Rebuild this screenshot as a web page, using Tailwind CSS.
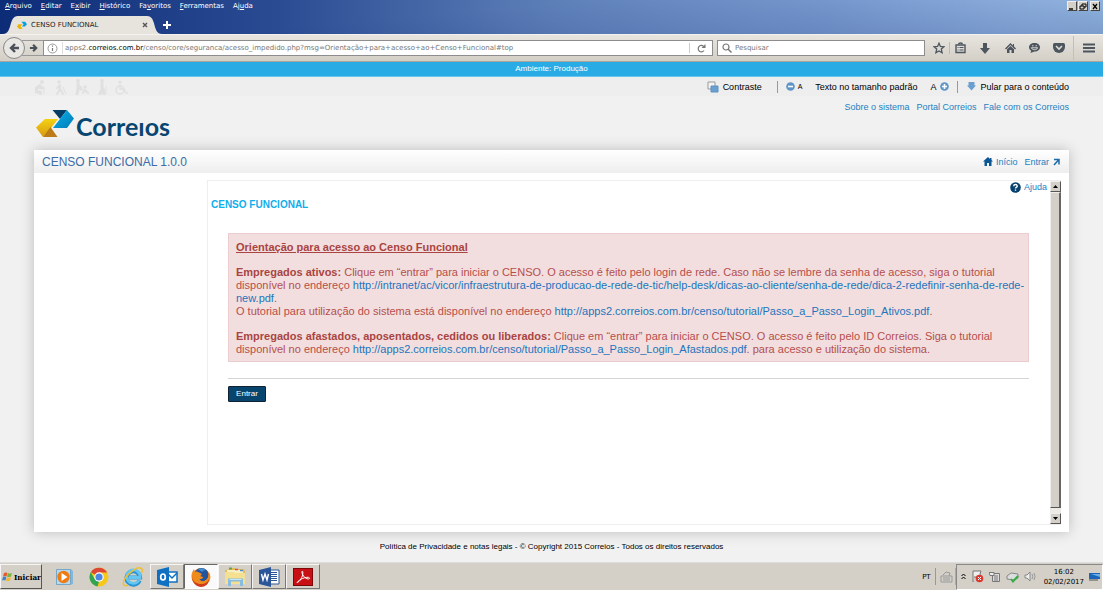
<!DOCTYPE html>
<html lang="pt-BR">
<head>
<meta charset="utf-8">
<title>CENSO FUNCIONAL</title>
<script src="https://cdn.jsdelivr.net/npm/@tailwindcss/browser@4"></script>
</head>
<body class="flex min-h-screen flex-col bg-[#f1f1f1] font-['Liberation_Sans',Arial,sans-serif] text-[9px] leading-3 text-[#222]">

<!-- Browser chrome -->
<header class="font-['DejaVu_Sans',sans-serif]">
  <div class="flex h-[34px] justify-between bg-[linear-gradient(175deg,transparent_40%,#0a246a44),linear-gradient(90deg,#0d2c78,#2a4b92_25%,#5d7fb8_50%,#7d9fd4_75%,#9fc2ec_94%,#a6caf0)]">
    <div class="flex flex-col justify-between">
      <nav class="flex h-3 gap-[9px] pl-[5px] text-[7px] text-white">
        <button><u>A</u>rquivo</button><button><u>E</u>ditar</button><button>E<u>x</u>ibir</button><button><u>H</u>istórico</button><button>Fa<u>v</u>oritos</button><button><u>F</u>erramentas</button><button>Aj<u>u</u>da</button>
      </nav>
      <div class="flex h-[18px] items-center pl-[2px]">
        <div class="relative flex h-[18px] w-[160px] items-center pl-[15px]">
          <svg class="absolute inset-0" width="160" height="18" viewBox="0 0 160 18"><path d="M1 18C11 18 6 0 16 0H145C155 0 150 18 160 18Z" fill="#e7e4de"/></svg>
          <svg class="relative mr-[4px]" width="10" height="9" viewBox="0 0 38 28"><path d="M5 9h16l-7 8 7 10H8L0 18z" fill="#eab20b"/><path d="M17 0h14l7 9-8 9H18l7-8z" fill="#09a1dc"/></svg>
          <span class="relative grow text-[7px] text-[#222]">CENSO FUNCIONAL</span>
          <button class="relative mr-[14px]" aria-label="Fechar aba"><svg width="6" height="6" viewBox="0 0 6 6"><path d="M1 1l4 4M5 1l-4 4" stroke="#555" stroke-width="1.4"/></svg></button>
        </div>
        <button aria-label="Nova aba"><svg width="10" height="8" viewBox="0 0 10 8"><path d="M5 0v8M1 4h8" stroke="#fff" stroke-width="2"/></svg></button>
      </div>
    </div>
    <div class="flex h-[11px] gap-px pt-px pr-[3px]">
      <button class="border border-[#eee] border-r-[#444] border-b-[#444] bg-[#d4d0c8]" aria-label="Minimizar"><svg width="8" height="7" viewBox="0 0 8 7"><path d="M1 6h4" stroke="#000" stroke-width="1.4"/></svg></button>
      <button class="border border-[#eee] border-r-[#444] border-b-[#444] bg-[#d4d0c8]" aria-label="Restaurar"><svg width="8" height="7" viewBox="0 0 8 7"><path d="M3 3V1h4v3H5M1 3h4v3H1z" fill="none" stroke="#000"/></svg></button>
      <button class="ml-px border border-[#eee] border-r-[#444] border-b-[#444] bg-[#d4d0c8]" aria-label="Fechar"><svg width="8" height="7" viewBox="0 0 8 7"><path d="M2 1l4 5M6 1L2 6" stroke="#000" stroke-width="1.3"/></svg></button>
    </div>
  </div>

  <div class="flex h-[28px] items-center border-t border-b border-t-[#f4f2ef] border-b-[#a9a59d] bg-linear-to-b from-[#e8e5e0] to-[#d3cfc6] pr-[8px] pl-[3px]">
    <button class="z-10 flex size-[22px] items-center justify-center rounded-full border border-[#888] bg-[#e9e7e3]" aria-label="Voltar"><svg width="11" height="10" viewBox="0 0 11 10"><path d="M10 5H2M6 1L2 5l4 4" fill="none" stroke="#4a5158" stroke-width="2.4"/></svg></button>
    <button class="-ml-[3px] flex h-4 w-[21px] items-center justify-center border-y border-[#999] pl-px" aria-label="Avançar"><svg width="9" height="8" viewBox="0 0 11 10"><path d="M1 5h8M5 1l4 4-4 4" fill="none" stroke="#4a5158" stroke-width="2.6"/></svg></button>
    <div class="flex h-4 min-w-0 grow items-center border border-[#8d8d8d] bg-white">
      <svg class="mr-[4px] ml-[3px] shrink-0" width="11" height="11" viewBox="0 0 11 11"><circle cx="5.500" cy="5.500" r="4.500" fill="none" stroke="#999"/><path d="M5.500 5v3M5.500 2.500v1.300" stroke="#777" stroke-width="1.200"/></svg>
      <span class="h-3 border-l border-[#ddd]"></span>
      <span class="ml-[2px] grow truncate text-[7px] text-[#777]">apps2.<b class="font-normal text-black">correios.com.br</b>/censo/core/seguranca/acesso_impedido.php?msg=Orientação+para+acesso+ao+Censo+Funcional#top</span>
      <button class="flex h-[10px] w-[23px] items-center justify-center border-l border-[#ccc]" aria-label="Recarregar"><svg width="9" height="9" viewBox="0 0 9 9"><path d="M7 6.500A3.200 3.200 0 1 1 6.500 2.200" fill="none" stroke="#777" stroke-width="1.200"/><path d="M8.500 0v4h-4z" fill="#777"/></svg></button>
    </div>
    <label class="ml-[4px] flex h-4 w-[208px] items-center border border-[#8d8d8d] bg-white pl-[4px]">
      <svg class="mr-[3px] shrink-0" width="10" height="10" viewBox="0 0 10 10"><circle cx="4" cy="4" r="3" fill="none" stroke="#777" stroke-width="1.200"/><path d="M6 6l3.500 3.500" stroke="#777" stroke-width="1.500"/></svg>
      <input class="w-full text-[7px] placeholder:text-[#777]" type="search" placeholder="Pesquisar" aria-label="Pesquisar">
    </label>
    <div class="flex items-center pl-[8px]">
      <button class="mr-[4px]" aria-label="Favoritar"><svg width="12" height="12" viewBox="0 0 12 12"><path d="M6 1.200l1.400 3.200 3.600.4-2.700 2.300.8 3.600L6 8.900l-3.100 1.800.8-3.600L1 4.800l3.600-.4z" fill="none" stroke="#4d565f" stroke-width="1.300"/></svg></button>
      <span class="mr-[5px] h-3 border-l border-[#bbb]"></span>
      <button class="mr-[14px]" aria-label="Biblioteca"><svg width="11" height="12" viewBox="0 0 11 12"><path d="M3.500 2.500c0-2 4-2 4 0" fill="none" stroke="#4d565f" stroke-width="1.300"/><path d="M1 3h9v7.500H1z" fill="none" stroke="#4d565f" stroke-width="1.400"/><path d="M2.500 5.500h1M4.500 5.500h4M2.500 8h1M4.500 8h4" stroke="#4d565f"/></svg></button>
      <button class="mr-[15px]" aria-label="Downloads"><svg width="10" height="11" viewBox="0 0 10 11"><path d="M3 0h4v5h3l-5 6-5-6h3z" fill="#4d565f"/></svg></button>
      <button class="mr-[13px]" aria-label="Página inicial"><svg width="11" height="11" viewBox="0 0 11 11"><path d="M5.500 0L0 5.500l1 1L5.500 2 10 6.500l1-1-2-2V1H8v1.500zM2 6.300L5.500 3 9 6.300V10H6.500V7h-2v3H2z" fill="#4d565f"/></svg></button>
      <button class="mr-[13px]" aria-label="Conversas"><svg width="11" height="10" viewBox="0 0 11 10"><path d="M5.500 0C9 0 11 2 11 4.300S9 8.600 5.500 8.600L1.500 10l.7-2.300C.8 7 0 5.800 0 4.300 0 2 2 0 5.500 0" fill="#4d565f"/><path d="M3 2.800h1.500M6.500 2.800H8M2.300 4.800c1 2.500 5.400 2.500 6.400 0z" fill="none" stroke="#dedbd4"/></svg></button>
      <button class="mr-[8px]" aria-label="Pocket"><svg width="12" height="10" viewBox="0 0 12 10"><path d="M1.500 0h9Q12 0 12 1.500V4a6 6 0 0 1-12 0V1.500Q0 0 1.500 0" fill="#4d565f"/><path d="M3 3l3 3 3-3" fill="none" stroke="#dedbd4" stroke-width="1.600"/></svg></button>
      <span class="mr-[9px] h-[24px] border-l border-[#c4c0b8]"></span>
      <button aria-label="Menu"><svg width="12" height="10" viewBox="0 0 12 10"><path d="M0 1.500h12M0 5h12M0 8.500h12" stroke="#4d565f" stroke-width="2"/></svg></button>
    </div>
  </div>
</header>

<!-- Environment banner and accessibility bar -->
<div class="flex h-[15px] items-center justify-center border-b border-[#6bc4ec] bg-[#29abe5] text-[8px] text-white">Ambiente: Produção</div>
<div class="flex h-[19px] items-center justify-between bg-[#eee] px-[34px] text-black">
  <svg width="94" height="16" viewBox="0 0 94 16" fill="none" stroke="#e0e0e0" stroke-width="2" stroke-linecap="round" stroke-linejoin="round">
    <g fill="#e0e0e0" stroke="none"><circle cx="8" cy="3" r="2"/><circle cx="25" cy="3" r="1.700"/><circle cx="44" cy="2" r="1.900"/><circle cx="51" cy="8" r="1.700"/><circle cx="68" cy="2" r="1.900"/><circle cx="86" cy="3" r="1.600"/></g>
    <path d="M6 6.500L2.500 9v4h4v2M4 8l5 1" stroke-width="3"/><path d="M10 9v6" stroke-width="1"/>
    <path d="M26 6v4l-3 5M26 10l3 5M26 6l-3 3"/><path d="M29 8l3 7" stroke-width="1"/>
    <path d="M44 5v5l-1 5M44 6l3 4" stroke-width="3"/><path d="M50 11l-1 3M51 11l3 3"/>
    <path d="M68 5v5l-2 5M69 10l1 5" stroke-width="3"/><path d="M72 8v7" stroke-width="1"/>
    <path d="M86 6v4h4l2 4h2" stroke-width="1.500"/><circle cx="86" cy="11" r="4" stroke-width="1.500"/>
  </svg>
  <div class="flex items-center">
    <a href="#contraste" class="flex items-center gap-[4px]"><svg width="12" height="12" viewBox="0 0 12 12"><path d="M1 1h7v7H1z" fill="#f4f4f4" stroke="#999"/><path d="M4 5h7v6H4z" fill="#6a9fd0" stroke="#5c91c4"/></svg>Contraste</a>
    <span class="mx-[8px] ml-[15px] h-3 border-l border-[#999]"></span>
    <button class="flex items-center gap-[3px] text-[7px]" aria-label="Diminuir texto"><svg width="9" height="9" viewBox="0 0 9 9"><circle cx="4.500" cy="4.500" r="4.300" fill="#5f96c9"/><path d="M2 4.500h5" stroke="#fff" stroke-width="1.600"/></svg>A</button>
    <button class="ml-[13px]">Texto no tamanho padrão</button>
    <button class="ml-[13px] flex items-center gap-[4px]" aria-label="Aumentar texto">A<svg width="9" height="9" viewBox="0 0 9 9"><circle cx="4.500" cy="4.500" r="4.300" fill="#5f96c9"/><path d="M2 4.500h5M4.500 2v5" stroke="#fff" stroke-width="1.600"/></svg></button>
    <span class="mr-[9px] ml-[8px] h-3 border-l border-[#999]"></span>
    <a href="#conteudo" class="flex items-center gap-[4px]"><svg width="9" height="9" viewBox="0 0 9 9"><path d="M1.500 0h6v3.500H9L4.500 8.500 0 3.500h1.500z" fill="#6a9fd0"/></svg>Pular para o conteúdo</a>
  </div>
</div>

<!-- Logo and site links -->
<div class="flex h-[54px] items-start justify-between px-[34px]">
  <a href="#inicio" class="mt-[13px] ml-[2px]" aria-label="Correios">
    <svg width="140" height="36" viewBox="0 0 140 36">
      <defs>
        <linearGradient id="gold" x2="0" y2="1"><stop stop-color="#f4d111"/><stop offset="1" stop-color="#d79a13"/></linearGradient>
        <linearGradient id="blue" x2="1" y2="1"><stop stop-color="#04b5ee"/><stop offset="1" stop-color="#0479b5"/></linearGradient>
      </defs>
      <path d="M9 10h13l-7 9-8 9L0 18.500z" fill="url(#gold)"/><path d="M14.500 18l7 10H7z" fill="#bd7b16"/>
      <path d="M16.500 1H31L24 10z" fill="#053d67"/><path d="M31 1l7 8.500L31 19H17l7-9z" fill="url(#blue)"/>
      <text x="40" y="27" font-family="Lato, 'Liberation Sans', sans-serif" font-size="25" font-weight="700" fill="#074670">Correıos</text>
    </svg>
  </a>
  <nav class="mt-[5px] flex gap-[7px] text-[#237fc1]"><a href="#sobre">Sobre o sistema</a><a href="#portal">Portal Correios</a><a href="#fale">Fale com os Correios</a></nav>
</div>

<!-- Application card -->
<main class="mx-[34px] flex grow flex-col bg-white pb-[7px] shadow-[0_0_12px_#bbb]">
  <div class="flex h-[23px] items-center justify-between bg-linear-to-b from-white to-[#eee] pr-[9px] pl-[8px]">
    <h1 class="text-[12px] text-[#3c6ca5]">CENSO FUNCIONAL 1.0.0</h1>
    <nav class="flex items-center gap-[7px] text-[#237fc1]">
      <a href="#inicio" class="flex items-center gap-[3px]"><svg width="10" height="9" viewBox="0 0 10 9"><path d="M5 0L0 4.500h1.500V9H4V6h2v3h2.500V4.500H10L8.500 3V1H7v1z" fill="#0b5796"/></svg>Início</a>
      <a href="#entrar" class="flex items-center gap-[4px]">Entrar<svg width="7" height="8" viewBox="0 0 7 8"><path d="M1 1.500h5v5M6 1.500L1 7" fill="none" stroke="#1c6aa8" stroke-width="1.500"/></svg></a>
    </nav>
  </div>
  <div class="mt-[7px] mr-[8px] ml-[173px] flex grow border-t border-b border-l border-[#eee]">
    <section id="conteudo" class="min-w-0 grow pr-[21px] pl-[3px]">
      <a href="#ajuda" class="-mr-[18px] flex items-center justify-end gap-[3px] text-[#237fc1]"><svg width="11" height="11" viewBox="0 0 11 11"><circle cx="5.500" cy="5.500" r="5.300" fill="#07406f"/><path d="M3.700 4.300c0-2.400 3.600-2.200 3.600-.2 0 1.300-1.800 1.300-1.800 2.500M5.500 7.500v1.300" fill="none" stroke="#fff" stroke-width="1.400"/></svg>Ajuda</a>
      <h2 class="mt-[6px] text-[10px] font-bold text-[#10aeec]">CENSO FUNCIONAL</h2>
      <div class="mt-[22px] ml-[17px] border border-[#ebcdd0] bg-[#f2dede] pt-[7px] pb-[5px] pl-[7px] text-[11px] leading-[13px] text-[#b54f4d]">
        <h3 class="font-bold text-[#a94442] underline">Orientação para acesso ao Censo Funcional</h3>
        <p class="mt-[12px]"><b class="text-[#a94442]">Empregados ativos:</b> Clique em “entrar” para iniciar o CENSO. O acesso é feito pelo login de rede. Caso não se lembre da senha de acesso, siga o tutorial<br>disponível no endereço <a class="text-[#1d75bd]" href="#dica">http://intranet/ac/vicor/infraestrutura-de-producao-de-rede-de-tic/help-desk/dicas-ao-cliente/senha-de-rede/dica-2-redefinir-senha-de-rede-<br>new.pdf</a>.<br>O tutorial para utilização do sistema está disponível no endereço <a class="text-[#1d75bd]" href="#ativos">http://apps2.correios.com.br/censo/tutorial/Passo_a_Passo_Login_Ativos.pdf</a>.</p>
        <p class="mt-[12px]"><b class="text-[#a94442]">Empregados afastados, aposentados, cedidos ou liberados:</b> Clique em “entrar” para iniciar o CENSO. O acesso é feito pelo ID Correios. Siga o tutorial<br>disponível no endereço <a class="text-[#1d75bd]" href="#afastados">http://apps2.correios.com.br/censo/tutorial/Passo_a_Passo_Login_Afastados.pdf</a>. para acesso e utilização do sistema.</p>
      </div>
      <hr class="mt-[16px] ml-[17px] border-[#d5d5d5]">
      <button class="mt-[7px] ml-[17px] h-4 w-[38px] rounded-[1px] border border-[#123] bg-[#07456f] text-[8px] text-white">Entrar</button>
    </section>
    <div class="flex w-[11px] shrink-0 flex-col bg-[#eceae6]">
      <button class="flex h-[11px] items-center justify-center border border-[#eee] border-r-[#555] border-b-[#555] bg-[#d4d0c8]" aria-label="Rolar para cima"><svg width="5" height="3" viewBox="0 0 5 3"><path d="M0 3L2.500 0 5 3z"/></svg></button>
      <div class="grow border border-r-2 border-[#eee] border-r-[#666] border-b-[#555] bg-[#d4d0c8]"></div>
      <button class="mt-[5px] flex h-[11px] items-center justify-center border border-[#eee] border-r-[#555] border-b-[#555] bg-[#d4d0c8]" aria-label="Rolar para baixo"><svg width="5" height="3" viewBox="0 0 5 3"><path d="M0 0h5L2.500 3z"/></svg></button>
    </div>
  </div>
</main>
<footer class="flex h-[30px] items-center justify-center text-[8px] text-black">Política de Privacidade e notas legais - © Copyright 2015 Correios - Todos os direitos reservados</footer>

<!-- Windows taskbar -->
<div class="flex h-[28px] items-center justify-between border-t border-[#ddd] bg-[#d4d0c8] font-['DejaVu_Sans',sans-serif] text-[7px] text-black">
  <div class="flex items-center">
    <button class="mr-[6px] flex h-[25px] w-[42px] items-center gap-px border border-[#f5f5f5] border-r-[#555] border-b-[#555] pl-px font-['DejaVu_Serif_Condensed','DejaVu_Serif',serif] text-[8px] font-bold"><svg class="shrink-0" width="11" height="11" viewBox="0 0 11 11"><path d="M2 2q2-1 3.500 0L4.500 5.500Q3 4.500 1 5.500z" fill="#e8582b"/><path d="M6 2q2 1 4 0L9 5.500q-2 1-4 0z" fill="#78b43b"/><path d="M1 6q2-1 3.300 0L3.500 9.500Q2 8.500 0 9.500z" fill="#3c83c9"/><path d="M5 6.200q2 1 4 0L8 9.500q-2 1-4 0z" fill="#f4b72a"/></svg>Iniciar</button>
    <button class="flex h-[25px] w-[34px] items-center justify-center" aria-label="Media Player"><svg width="20" height="18" viewBox="0 0 20 18"><path d="M4 1h12l2 2v13l-3 1H4z" fill="#86b8d6"/><path d="M1.500 1.500h14v15h-14z" fill="#b5d9ee" stroke="#74a7c8"/><circle cx="8.500" cy="9" r="6.200" fill="#ef7c13"/><path d="M6.500 5l6 4-6 4z" fill="#fff"/></svg></button>
    <button class="flex h-[25px] w-[34px] items-center justify-center" aria-label="Chrome"><svg width="20" height="20" viewBox="0 0 20 20"><circle cx="10" cy="10" r="9.500" fill="#f6c81c"/><path d="M10 10L1.800 5.200A9.500 9.500 0 0 1 18.200 5.500H10z" fill="#de4735"/><path d="M1.800 5.200L6 12.500 10 14.500 8.500 19.400A9.500 9.500 0 0 1 1.800 5.200" fill="#31a456"/><circle cx="10" cy="10" r="4.700" fill="#fff"/><circle cx="10" cy="10" r="3.600" fill="#4d85e5"/></svg></button>
    <button class="flex h-[25px] w-[34px] items-center justify-center" aria-label="Internet Explorer"><svg width="22" height="20" viewBox="0 0 22 20"><path d="M17.500 13.500A6.700 6.700 0 1 1 18 10.500H7" fill="none" stroke="#2b93cf" stroke-width="4.200"/><path d="M16.800 13.500A6.700 6.700 0 1 1 18 10.500H7" fill="none" stroke="#63c6f2" stroke-width="2.800"/><path d="M6 18C0 20.500 0 15 4 10S15-.5 19 1.200c2 .8 1.500 3 .5 5" fill="none" stroke="#efbf32" stroke-width="1.500"/></svg></button>
    <button class="flex h-[25px] w-[34px] items-center justify-center border border-[#f5f5f5] border-r-[#777] border-b-[#777]" aria-label="Outlook"><svg width="22" height="20" viewBox="0 0 22 20"><path d="M11 5h10v10H11z" fill="#fff" stroke="#0f6fc1" stroke-width="1.500"/><path d="M12 7l4 4 5-5" fill="none" stroke="#0f6fc1" stroke-width="1.500"/><path d="M1 3l12-3v20L1 17z" fill="#0f6fc1"/><ellipse cx="7" cy="10" rx="2.300" ry="3" fill="none" stroke="#fff" stroke-width="1.700"/></svg></button>
    <button class="flex h-[25px] w-[34px] items-center justify-center border border-[#666] border-r-white border-b-white bg-[#fafafa]" aria-label="Firefox"><svg width="20" height="20" viewBox="0 0 20 20"><circle cx="10" cy="10" r="9" fill="#e66b17"/><circle cx="10.500" cy="8" r="7" fill="#24549c"/><path d="M7 2q4-2 8 1-3 0-4 2z" fill="#3f8fd0"/><path d="M3 2C1 5 0 8 .6 11a9.500 9.500 0 0 0 18.800 0c.2-3-1-5-2-6 .5 4-.4 6-2 7.500-3 3-6 1.500-7-.5 2 .5 3-1 4-1.500-.5-1-2-.7-3-1.500L11 7 8 5.500 6 4.500 4 5z" fill="#ef8b1c"/><path d="M1 10c1 5 5 7 9 7s7-2 8-5c0 5-4 8-8 8s-9-4-9-10" fill="#cf3c19"/></svg></button>
    <button class="flex h-[25px] w-[34px] items-center justify-center border border-[#f5f5f5] border-r-[#777] border-b-[#777]" aria-label="Explorador de arquivos"><svg width="22" height="20" viewBox="0 0 22 20"><path d="M1 3h3l1-2h6l1 1h8l1 2v13H1z" fill="#e2bd5c"/><path d="M3 3h16v3H3z" fill="#f9eec1"/><path d="M5 1.500h3" stroke="#5ca84e" stroke-width="2"/><path d="M11 2.500h3" stroke="#d4553b" stroke-width="1.500"/><path d="M16 3.500h3" stroke="#4c8fcc" stroke-width="1.500"/><path d="M1 5h9l1 1h10v11H1z" fill="#f5df91"/><path d="M5.500 19v-6h12v6" fill="none" stroke="#86bde0" stroke-width="3"/><path d="M5.500 12.500h12" stroke="#c5e4f5"/></svg></button>
    <button class="flex h-[25px] w-[34px] items-center justify-center border border-[#f5f5f5] border-r-[#777] border-b-[#777]" aria-label="Word"><svg width="22" height="20" viewBox="0 0 22 20"><path d="M11 3h10v14H11z" fill="#fff" stroke="#2a5699"/><path d="M13 5.500h6M13 7.500h6M13 9.500h6M13 11.500h6M13 13.500h6" stroke="#2a5699"/><path d="M1 3l12-3v20L1 17z" fill="#2a5699"/><path d="M3.500 7l1.500 6 2-6 2 6 1.500-6" fill="none" stroke="#fff" stroke-width="1.400"/></svg></button>
    <button class="flex h-[25px] w-[34px] items-center justify-center border border-[#f5f5f5] border-r-[#777] border-b-[#777]" aria-label="Adobe Reader"><svg width="20" height="18" viewBox="0 0 20 18"><path d="M0 0h20v18H0z" fill="#7d080b"/><path d="M1 1h18v16H1z" fill="#c80f14"/><path d="M4.500 14.500C8 12.500 10.500 7 9.700 3.500c-.6-1.500-1.700 1.500.8 4.500 2 3 6 3.800 6 2.200s-4.500-1-8 .8-5.500 4.500-4 3.500z" fill="none" stroke="#fff"/></svg></button>
  </div>
  <div class="flex h-full items-center">
    <span>PT</span>
    <span class="mx-[4px] h-[17px] border-l border-[#999]"></span>
    <svg width="13" height="12" viewBox="0 0 13 12"><path d="M3 4l3-3 4 1-1 3M1 5h11v6H1zM3 7h7M3 9h7" fill="none" stroke="#999"/></svg>
    <span class="ml-[2px] h-[17px] border-l border-[#aaa]"></span>
    <div class="flex h-[26px] items-center gap-[5px] border border-[#888] border-r-white border-b-white pr-[2px] pl-[4px]">
      <svg width="5" height="7" viewBox="0 0 5 7"><path d="M0.500 3L2.500 1l2 2M0.500 6l2-2 2 2" fill="none" stroke="#000"/></svg>
      <svg width="13" height="13" viewBox="0 0 13 13"><path d="M2 12V1h8l-1 3 1 3H3" fill="#eee" stroke="#777"/><circle cx="8.500" cy="8.500" r="3.800" fill="#d63a31"/><path d="M7 7l3 3M10 7l-3 3" stroke="#fff"/></svg>
      <svg width="12" height="12" viewBox="0 0 12 12"><path d="M3.500 2.500h7v8h-7z" fill="#ddd" stroke="#777"/><path d="M5 5h4M5 7h4M5 9h4M0 1.500h5v3H1z" fill="#eee" stroke="#777"/></svg>
      <svg width="13" height="12" viewBox="0 0 13 12"><path d="M1 5l4-3 7 1v4l-4 2-7-1z" fill="#ddd" stroke="#888"/><path d="M5 8l2 2.500L12 5" fill="none" stroke="#35ae45" stroke-width="2"/></svg>
      <svg width="12" height="11" viewBox="0 0 12 11"><path d="M1 4h2l3-3v9L3 7H1z" fill="#eee" stroke="#888"/><path d="M8 3q1.500 2.500 0 5M10 2q2 3.500 0 7" fill="none" stroke="#999"/></svg>
      <time class="ml-[3px] text-center leading-[10px]">16:02<br>02/02/2017</time>
      <svg width="11" height="9" viewBox="0 0 11 9"><path d="M0 1h11v6H0z" fill="#1b66b8"/><path d="M2 2h9v3z" fill="#69b0e8"/><path d="M0 8h9" stroke="#555"/></svg>
    </div>
  </div>
</div>
</body>
</html>
